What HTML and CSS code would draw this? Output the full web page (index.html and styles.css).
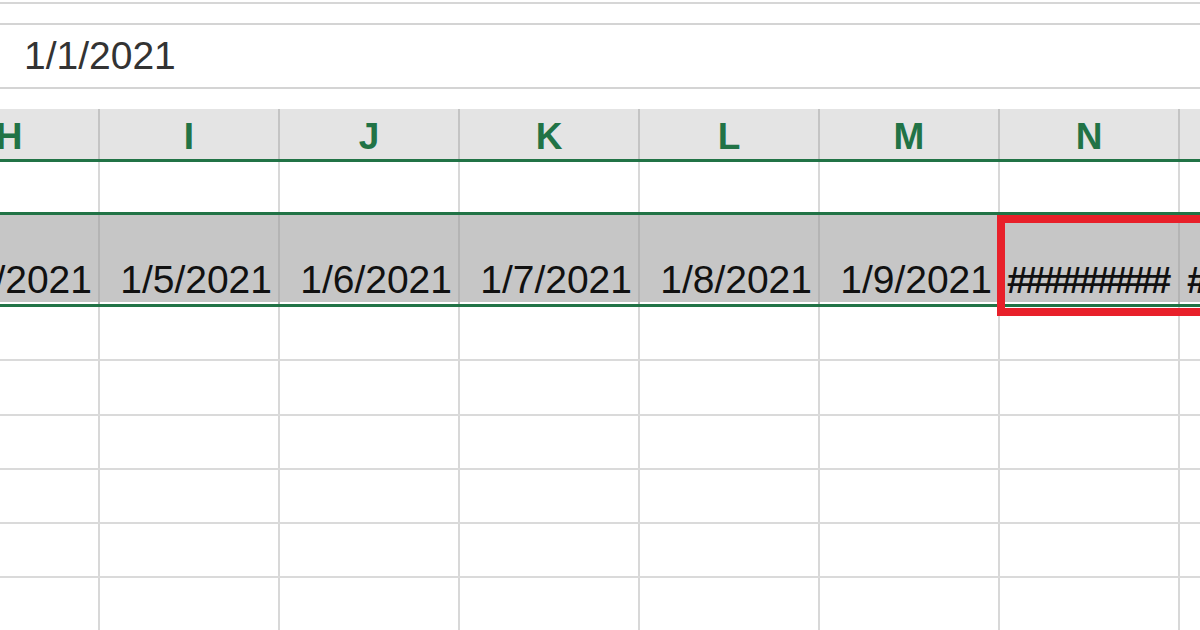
FILE: index.html
```html
<!DOCTYPE html>
<html lang="en">
<head>
  <meta charset="UTF-8">
  <title>Dates too wide for column</title>
  <link rel="stylesheet" href="styles.css">
</head>
<body>

  <!-- Formula bar -->
  <div class="ribbon-edge"></div>
  <div class="formula-bar">1/1/2021</div>

  <div class="sheet">
    <!-- Column headers -->
    <div class="row head">
      <div class="cell">H</div>
      <div class="cell">I</div>
      <div class="cell">J</div>
      <div class="cell">K</div>
      <div class="cell">L</div>
      <div class="cell">M</div>
      <div class="cell">N</div>
      <div class="cell">O</div>
    </div>

    <div class="row">
      <div class="cell"></div><div class="cell"></div><div class="cell"></div><div class="cell"></div>
      <div class="cell"></div><div class="cell"></div><div class="cell"></div><div class="cell"></div>
    </div>

    <!-- Selected row with dates -->
    <div class="row selected">
      <div class="cell">1/4/2021</div>
      <div class="cell">1/5/2021</div>
      <div class="cell">1/6/2021</div>
      <div class="cell">1/7/2021</div>
      <div class="cell">1/8/2021</div>
      <div class="cell">1/9/2021</div>
      <div class="cell hashes">#########<span class="highlight"></span></div>
      <div class="cell hashes">#########</div>
    </div>

    <div class="row">
      <div class="cell"></div><div class="cell"></div><div class="cell"></div><div class="cell"></div>
      <div class="cell"></div><div class="cell"></div><div class="cell"></div><div class="cell"></div>
    </div>
    <div class="row">
      <div class="cell"></div><div class="cell"></div><div class="cell"></div><div class="cell"></div>
      <div class="cell"></div><div class="cell"></div><div class="cell"></div><div class="cell"></div>
    </div>
    <div class="row">
      <div class="cell"></div><div class="cell"></div><div class="cell"></div><div class="cell"></div>
      <div class="cell"></div><div class="cell"></div><div class="cell"></div><div class="cell"></div>
    </div>
    <div class="row">
      <div class="cell"></div><div class="cell"></div><div class="cell"></div><div class="cell"></div>
      <div class="cell"></div><div class="cell"></div><div class="cell"></div><div class="cell"></div>
    </div>
    <div class="row">
      <div class="cell"></div><div class="cell"></div><div class="cell"></div><div class="cell"></div>
      <div class="cell"></div><div class="cell"></div><div class="cell"></div><div class="cell"></div>
    </div>
    <div class="row">
      <div class="cell"></div><div class="cell"></div><div class="cell"></div><div class="cell"></div>
      <div class="cell"></div><div class="cell"></div><div class="cell"></div><div class="cell"></div>
    </div>
  </div>

</body>
</html>
```

FILE: styles.css
```css
body {
  margin: 0;
  width: 1200px;
  height: 630px;
  overflow: hidden;
  background: #fff;
  font-family: "Liberation Sans", Arial, sans-serif;
}
.ribbon-edge {
  margin-top: 2px;
  height: 19px;
  border-top: 2px solid #d6d6d6;
}
.formula-bar {
  height: 62px;
  border-top: 2px solid #d4d4d4;
  border-bottom: 2px solid #d4d4d4;
  padding-left: 24px;
  display: flex;
  align-items: center;
  font-size: 39px;
  color: #333;
  margin-bottom: 20px;
}
.sheet {
  margin-left: -80px;
  width: 1440px;
}
.row {
  display: flex;
  height: 54.3px;
  box-sizing: border-box;
  border-bottom: 2px solid #dadada;
}
.cell {
  width: 180px;
  flex: none;
  box-sizing: border-box;
  border-right: 2px solid #d8d8d8;
}
.head {
  height: 53px;
  background: #e4e4e4;
  border-bottom: 3px solid #217346;
}
.head .cell {
  display: flex;
  justify-content: center;
  align-items: center;
  padding-top: 6px;
  border-right-color: #c4c4c4;
  color: #217346;
  font-weight: bold;
  font-size: 37px;
}
.row.head + .row {
  height: 53px;
  border-bottom: 3px solid #217346;
}
.selected {
  height: 92px;
  background: #c6c6c6;
  border-bottom: 3px solid #217346;
  box-shadow: inset 0 -2px 0 #fff;
}
.selected .cell {
  display: flex;
  justify-content: flex-end;
  align-items: flex-end;
  padding: 0 6px 5px 0;
  border-right-color: #b4b4b4;
  font-size: 39px;
  line-height: 1;
  color: #111;
}
.selected .hashes {
  position: relative;
  justify-content: flex-start;
  padding-left: 7px;
  letter-spacing: -3.6px;
  font-weight: bold;
  font-size: 37px;
  letter-spacing: -2.6px;
}
.highlight {
  position: absolute;
  left: -3px;
  top: 0;
  width: 260px;
  height: 101px;
  box-sizing: border-box;
  border: 8px solid #e8202a;
}
```
